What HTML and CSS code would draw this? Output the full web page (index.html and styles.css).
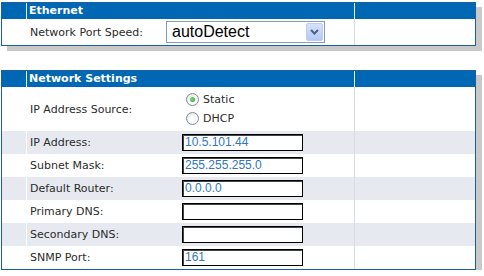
FILE: index.html
```
<!doctype html>
<html lang="en">
<head>
<meta charset="UTF-8">
<title>Network Settings</title>
<link rel="stylesheet" href="styles.css">
</head>
<body>
<div class="page">

<div class="panel eth">
  <div class="row head">
    <div class="c1"></div>
    <div class="title">Ethernet</div>
    <div class="c4"></div>
  </div>
  <div class="row speed">
    <div class="c1"></div>
    <div class="lab">Network Port Speed:</div>
    <div class="fld">
      <div class="select">
        <span class="sel-text">autoDetect</span>
        <span class="drop">
          <svg width="9" height="6" viewBox="0 0 9 6"><path d="M1 1 L4.5 4.5 L8 1" fill="none" stroke="#4d6185" stroke-width="2"/></svg>
        </span>
      </div>
    </div>
    <div class="c4"></div>
  </div>
</div>

<div class="panel net">
  <div class="row head">
    <div class="c1"></div>
    <div class="title">Network Settings</div>
    <div class="c4"></div>
  </div>
  <div class="row src">
    <div class="c1"></div>
    <div class="lab">IP Address Source:</div>
    <div class="fld radios">
      <label class="radio"><span class="dot on"></span>Static</label>
      <label class="radio"><span class="dot"></span>DHCP</label>
    </div>
    <div class="c4"></div>
  </div>
  <div class="row alt">
    <div class="c1"></div>
    <div class="lab">IP Address:</div>
    <div class="fld"><div class="box">10.5.101.44</div></div>
    <div class="c4"></div>
  </div>
  <div class="row">
    <div class="c1"></div>
    <div class="lab">Subnet Mask:</div>
    <div class="fld"><div class="box">255.255.255.0</div></div>
    <div class="c4"></div>
  </div>
  <div class="row alt">
    <div class="c1"></div>
    <div class="lab">Default Router:</div>
    <div class="fld"><div class="box">0.0.0.0</div></div>
    <div class="c4"></div>
  </div>
  <div class="row">
    <div class="c1"></div>
    <div class="lab">Primary DNS:</div>
    <div class="fld"><div class="box"></div></div>
    <div class="c4"></div>
  </div>
  <div class="row alt">
    <div class="c1"></div>
    <div class="lab">Secondary DNS:</div>
    <div class="fld"><div class="box"></div></div>
    <div class="c4"></div>
  </div>
  <div class="row">
    <div class="c1"></div>
    <div class="lab">SNMP Port:</div>
    <div class="fld"><div class="box">161</div></div>
    <div class="c4"></div>
  </div>
</div>

</div>
</body>
</html>
```

FILE: styles.css
```
body {
    margin: 0;
    background: #ffffff;
    font-family: "DejaVu Sans", Verdana, sans-serif;
    font-size: 11px;
    color: #2b2b2b;
}
.page {
    padding: 2px 0 0 1px;
}
.panel {
    width: 473px;
    border: 1px solid #1c5e9e;
    background: #ffffff;
    box-shadow: 6px 5px 0 #c9c9c9;
}
.net {
    margin-top: 24px;
}
.row {
    display: grid;
}
.eth .row {
    grid-template-columns: 24px 140px 188px 121px;
}
.net .row {
    grid-template-columns: 24px 156px 172px 121px;
}
.row.head {
    grid-template-columns: 24px 328px 121px;
    height: 16px;
    background: #0067b4;
}
.head .title {
    border-left: 1px solid #e8eef5;
    padding-left: 2px;
    color: #ffffff;
    font-weight: bold;
    line-height: 16px;
}
.head .c4 {
    border-left: 1px solid #e8eef5;
}
.lab {
    border-left: 1px solid #ffffff;
    padding-left: 3px;
    display: flex;
    align-items: center;
}
.c4 {
    border-left: 1px solid #d5dce4;
}
.fld {
    display: flex;
    align-items: center;
}
.speed {
    height: 26px;
}
.net .row {
    height: 23px;
}
.net .row.head {
    height: 16px;
}
.net .row.src {
    height: 44px;
}
.alt {
    background: #e6eaf0;
}

/* fake dropdown */
.select {
    width: 157px;
    height: 20px;
    border: 1px solid #7f9db9;
    display: flex;
    align-items: center;
    justify-content: space-between;
    font-family: "Liberation Sans", Arial, sans-serif;
    font-size: 16px;
    color: #000;
}
.sel-text {
    padding-left: 5px;
}
.drop {
    width: 15px;
    height: 16px;
    margin-right: 1px;
    border: 1px solid #bccbef;
    border-radius: 2px;
    background: linear-gradient(#d6e1fb, #b6c9f6);
    display: flex;
    align-items: center;
    justify-content: center;
}

/* radios */
.radios {
    flex-direction: column;
    align-items: flex-start;
    justify-content: center;
    padding-left: 4px;
    gap: 6px;
}
.radio {
    display: flex;
    align-items: center;
    gap: 4px;
    height: 13px;
}
.dot {
    width: 11px;
    height: 11px;
    border: 1px solid #7f8b97;
    border-radius: 50%;
    background: radial-gradient(circle at 60% 65%, #ffffff 30%, #dcdcd6 100%);
    display: flex;
    align-items: center;
    justify-content: center;
}
.dot.on::after {
    content: "";
    width: 5px;
    height: 5px;
    border-radius: 50%;
    background: radial-gradient(circle at 40% 40%, #7ee07e, #21a121);
}

/* text boxes */
.box {
    width: 117px;
    height: 15px;
    border: 1px solid #000;
    box-shadow: inset 1px 1px 0 #444;
    background: #ffffff;
    padding-left: 2px;
    font-family: "Liberation Sans", Arial, sans-serif;
    font-size: 12px;
    line-height: 15px;
    color: #2f78bd;
}
```
